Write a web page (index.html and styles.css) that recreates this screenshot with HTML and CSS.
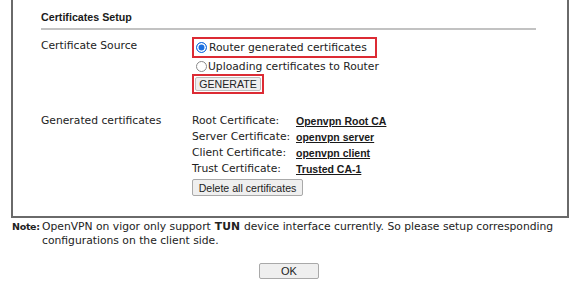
FILE: index.html
```html
<!DOCTYPE html>
<html>
<head>
<meta charset="utf-8">
<link rel="stylesheet" href="styles.css">
</head>
<body>
<div class="panel">
  <div class="head"><span class="head-title">Certificates Setup</span></div>
  <div class="row row-source">
    <div class="label">Certificate Source</div>
    <div class="value">
      <div class="hl hl-radio"><span class="radio checked"></span><span>Router generated certificates</span></div>
      <div class="opt"><span class="radio"></span><span>Uploading certificates to Router</span></div>
      <div class="hl hl-btn"><span class="btn btn-gen">GENERATE</span></div>
    </div>
  </div>
  <div class="row row-gen">
    <div class="label">Generated certificates</div>
    <div class="value">
      <div class="certs">
        <span>Root Certificate:</span><a class="link">Openvpn Root CA</a>
        <span>Server Certificate:</span><a class="link">openvpn server</a>
        <span>Client Certificate:</span><a class="link">openvpn client</a>
        <span>Trust Certificate:</span><a class="link">Trusted CA-1</a>
      </div>
      <span class="btn btn-del">Delete all certificates</span>
    </div>
  </div>
</div>
<div class="note">
  <div class="note-label">Note:</div>
  <div class="note-text">
    <div class="note-line"><span>OpenVPN on vigor only support</span><b>TUN</b><span>device interface currently. So please setup corresponding</span></div>
    <div class="note-line">configurations on the client side.</div>
  </div>
</div>
<div class="actions"><span class="btn btn-ok">OK</span></div>
</body>
</html>
```
FILE: styles.css
```css
html, body {
  margin: 0;
  padding: 0;
  background: #fff;
}
body {
  width: 576px;
  height: 295px;
  overflow: hidden;
  font-family: "DejaVu Sans", Verdana, sans-serif;
  font-size: 10.75px;
  color: #222;
}
.panel {
  margin-left: 11px;
  width: 554px;
  border: 2px solid #6a6a6a;
  border-top: none;
  padding-bottom: 20px;
}
.head {
  margin-left: 28px;
  width: 495px;
  height: 30px;
  border-bottom: 2px solid #c2c2c2;
  display: flex;
  align-items: center;
  box-sizing: border-box;
}
.head-title {
  font-family: "Liberation Sans", Arial, sans-serif;
  font-weight: bold;
  font-size: 10.7px;
  color: #1a1a1a;
  margin-top: 5px;
}
.row {
  display: flex;
}
.label {
  width: 151px;
  padding-left: 28px;
  box-sizing: content-box;
  line-height: 14px;
}
.row-source {
  padding-top: 7px;
}
.row-source .label {
  margin-top: 2px;
}
.row-gen {
  padding-top: 19px;
}
.row-gen .label {
  margin-top: 1px;
}
.value {
  display: flex;
  flex-direction: column;
  align-items: flex-start;
}
.hl {
  border: 2px solid #dc2b34;
  box-sizing: border-box;
}
.hl-radio {
  width: 185px;
  height: 21px;
  display: flex;
  align-items: center;
  padding-left: 2px;
}
.opt {
  height: 16px;
  display: flex;
  align-items: center;
  padding-left: 4px;
}
.radio {
  width: 11px;
  height: 11px;
  border: 1px solid #8a8a8a;
  border-radius: 50%;
  box-sizing: border-box;
  margin-right: 1px;
  background: #fff;
}
.radio.checked {
  border-color: #1a6fe0;
  background: #1a6fe0;
  box-shadow: inset 0 0 0 1.5px #fff;
  margin-right: 2px;
}
.hl-btn {
  width: 72px;
  height: 20px;
  padding: 1px;
  display: flex;
}
.btn {
  font-family: "Liberation Sans", Arial, sans-serif;
  font-size: 10.6px;
  color: #222;
  background: #efefef;
  border: 1px solid #a9a9a9;
  border-radius: 2px;
  box-sizing: border-box;
  display: flex;
  align-items: center;
  justify-content: center;
}
.btn-gen {
  flex: 1;
  border-color: #bdbdbd;
}
.certs {
  display: grid;
  grid-template-columns: 104px auto;
  line-height: 16px;
}
.link {
  font-family: "Liberation Sans", Arial, sans-serif;
  font-weight: bold;
  font-size: 10.5px;
  color: #1a1a1a;
  text-decoration: underline;
}
.btn-del {
  margin-top: 2px;
  width: 111px;
  height: 17px;
}
.note {
  display: flex;
  margin-top: 2px;
  line-height: 14px;
}
.note-label {
  width: 42px;
  padding-left: 12px;
  box-sizing: border-box;
  font-weight: bold;
  font-size: 9.5px;
  letter-spacing: -0.3px;
  white-space: nowrap;
}
.note-text {
  width: 530px;
}
.note-line {
  display: flex;
  gap: 4px;
  white-space: nowrap;
}
.actions {
  display: flex;
  justify-content: center;
  margin-top: 15px;
  padding-left: 2px;
}
.btn-ok {
  width: 60px;
  height: 16px;
  font-size: 11px;
}
```
